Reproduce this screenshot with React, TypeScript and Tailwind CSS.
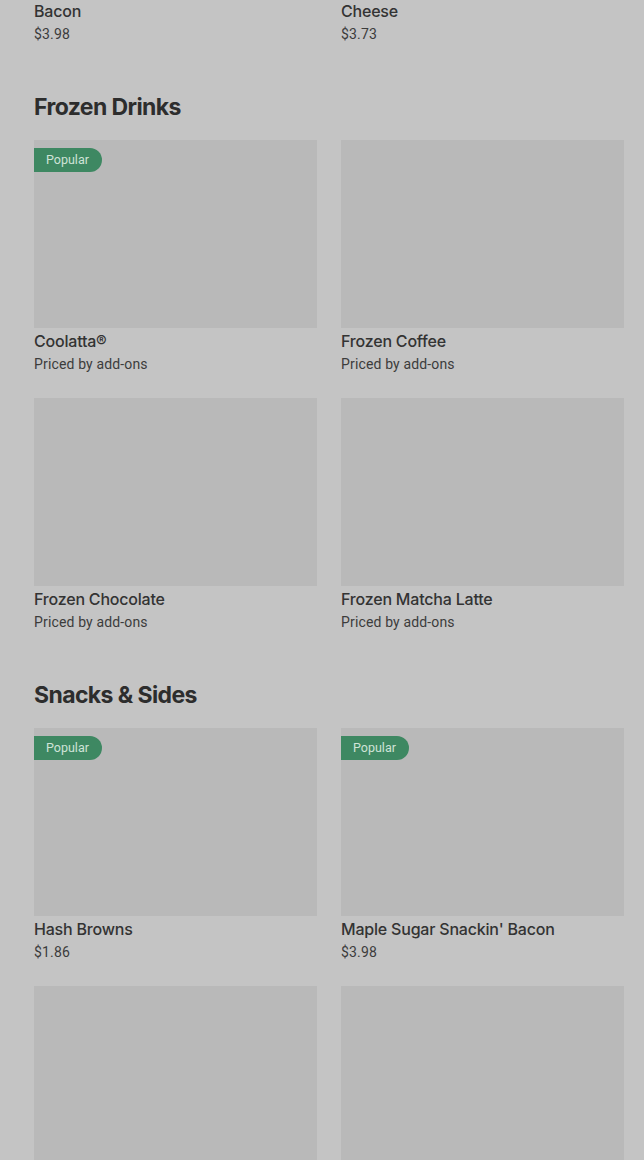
import React from "react";

type Item = { name: string; price: string; popular?: boolean };

const frozen: Item[] = [
  { name: "Coolatta®", price: "Priced by add-ons", popular: true },
  { name: "Frozen Coffee", price: "Priced by add-ons" },
  { name: "Frozen Chocolate", price: "Priced by add-ons" },
  { name: "Frozen Matcha Latte", price: "Priced by add-ons" },
];

const snacks: Item[] = [
  { name: "Hash Browns", price: "$1.86", popular: true },
  { name: "Maple Sugar Snackin' Bacon", price: "$3.98", popular: true },
  { name: "Hash Browns Bites", price: "$2.49" },
  { name: "Stuffed Biscuit Bites", price: "$3.49" },
];

const priceFont = { fontFamily: "Roboto, 'Liberation Sans', sans-serif" };

function Card({ item }: { item: Item }) {
  return (
    <div className="flex flex-col">
      <div className="relative h-[188px] w-full bg-[#b9b9b9]">
        {item.popular && (
          <span
            className="absolute left-0 top-[8px] flex h-[24px] items-center rounded-r-full bg-[#3e8862] pl-[12px] pr-[13px] text-[12.5px] text-[#cfe3d7]"
            style={priceFont}
          >
            Popular
          </span>
        )}
      </div>
      <div className="mt-[2px] text-[16px] font-medium leading-[22px] tracking-[-0.2px] text-[#333333]">
        {item.name}
      </div>
      <div className="pt-[2px] text-[14px] leading-[20px] tracking-[0.15px] text-[#3c3c3c]" style={priceFont}>
        {item.price}
      </div>
    </div>
  );
}

function Section({ title, items }: { title: string; items: Item[] }) {
  return (
    <section>
      <h2 className="mt-[47px] text-[23px] font-bold leading-[32px] tracking-[-0.6px] text-[#2d2d2d]">
        {title}
      </h2>
      <div className="mt-[17px] grid grid-cols-2 gap-x-[24px] gap-y-[24px]">
        {items.map((it) => (
          <Card key={it.name} item={it} />
        ))}
      </div>
    </section>
  );
}

export default function App() {
  return (
    <div
      className="h-[1160px] overflow-hidden bg-[#c4c4c4] pl-[34px] pr-[20px]"
      style={{ fontFamily: "Inter, 'Noto Sans', sans-serif" }}
    >
      <div className="-mt-[22px] grid grid-cols-2 gap-x-[24px]">
        <div>
          <div className="text-[16px] font-medium leading-[22px] tracking-[-0.2px] text-[#333333]">
            Wake-Up Wrap® - Egg &amp; Cheese with
            <br />
            Bacon
          </div>
          <div className="pt-[2px] text-[14px] leading-[20px] tracking-[0.15px] text-[#3c3c3c]" style={priceFont}>
            $3.98
          </div>
        </div>
        <div>
          <div className="text-[16px] font-medium leading-[22px] tracking-[-0.2px] text-[#333333]">
            Wake-Up Wrap® - Sausage, Egg &amp;
            <br />
            Cheese
          </div>
          <div className="pt-[2px] text-[14px] leading-[20px] tracking-[0.15px] text-[#3c3c3c]" style={priceFont}>
            $3.73
          </div>
        </div>
      </div>
      <Section title="Frozen Drinks" items={frozen} />
      <Section title="Snacks & Sides" items={snacks} />
    </div>
  );
}
